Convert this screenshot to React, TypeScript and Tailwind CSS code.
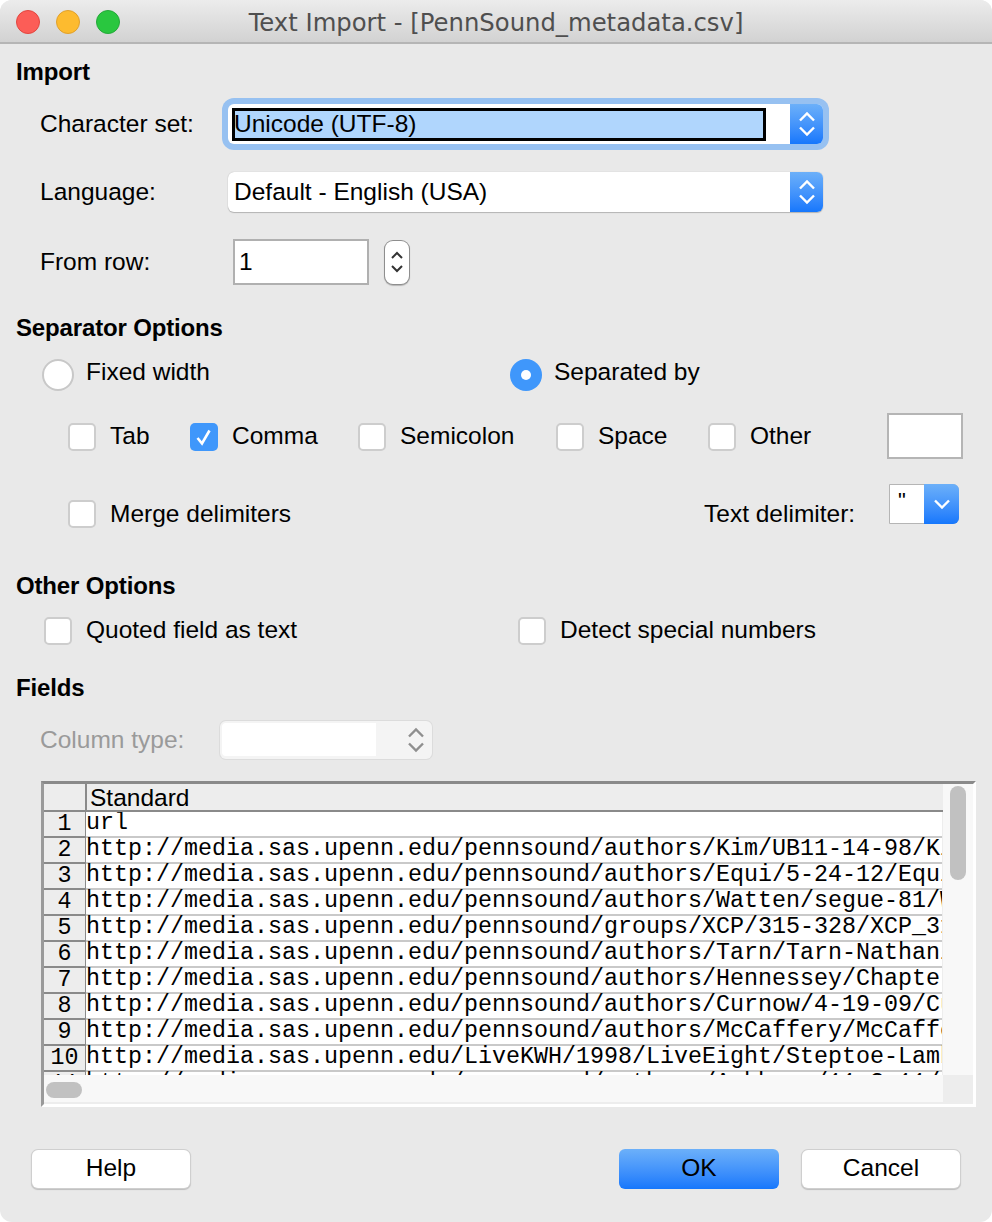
const rows = [
  "url",
  "http://media.sas.upenn.edu/pennsound/authors/Kim/UB11-14-98/Kim",
  "http://media.sas.upenn.edu/pennsound/authors/Equi/5-24-12/Equi",
  "http://media.sas.upenn.edu/pennsound/authors/Watten/segue-81/Watten",
  "http://media.sas.upenn.edu/pennsound/groups/XCP/315-328/XCP_315",
  "http://media.sas.upenn.edu/pennsound/authors/Tarn/Tarn-Nathaniel",
  "http://media.sas.upenn.edu/pennsound/authors/Hennessey/Chapter",
  "http://media.sas.upenn.edu/pennsound/authors/Curnow/4-19-09/Curnow",
  "http://media.sas.upenn.edu/pennsound/authors/McCaffery/McCaffery",
  "http://media.sas.upenn.edu/LiveKWH/1998/LiveEight/Steptoe-Lamb",
  "http://media.sas.upenn.edu/pennsound/authors/Ashbery/11-3-11/Ashbery",
];

function Updown({ color = "white" }: { color?: string }) {
  return (
    <svg width="16" height="26" viewBox="0 0 16 26" fill="none" stroke={color} strokeWidth="2.4">
      <path d="M1 9.5 L8 2.5 L15 9.5" />
      <path d="M1 16.5 L8 23.5 L15 16.5" />
    </svg>
  );
}

function Check({ checked, className = "" }: { checked?: boolean; className?: string }) {
  return (
    <span
      className={
        checked
          ? "flex h-7 w-7 shrink-0 items-center justify-center rounded-[5px] bg-[#3f97fb] " + className
          : "block h-7 w-7 shrink-0 rounded-[5px] border-2 border-[#cdcdcd] bg-white " + className
      }
    >
      {checked && (
        <svg width="18" height="18" viewBox="0 0 18 18" fill="none" stroke="white" strokeWidth="2.6">
          <path d="M2.5 10 L7 15.5 L14.5 2.5" />
        </svg>
      )}
    </span>
  );
}

function Option({ label, width, checked }: { label: string; width: string; checked?: boolean }) {
  return (
    <div className={"flex items-center gap-[14px] " + width}>
      <Check checked={checked} />
      <span>{label}</span>
    </div>
  );
}

function Radio({ label, selected, width }: { label: string; selected?: boolean; width: string }) {
  return (
    <div className={"flex items-center gap-3 " + width}>
      {selected ? (
        <span className="flex h-8 w-8 items-center justify-center rounded-full bg-[#3f97fb]">
          <span className="h-[10px] w-[10px] rounded-full bg-white" />
        </span>
      ) : (
        <span className="block h-8 w-8 rounded-full border-2 border-[#c8c8c8] bg-white" />
      )}
      <span className="-translate-y-[3px]">{label}</span>
    </div>
  );
}

function Heading({ children, className = "" }: { children: string; className?: string }) {
  return <h2 className={"pl-4 font-bold leading-7 text-[24px] tracking-[-0.15px] " + className}>{children}</h2>;
}

function PushButton({ label, primary, className = "" }: { label: string; primary?: boolean; className?: string }) {
  return (
    <button
      className={
        (primary
          ? "h-[40px] w-[160px] bg-gradient-to-b from-[#6cb0f9] to-[#1577fc] "
          : "mt-px h-[38px] w-[158px] bg-white shadow-[0_0_0_1px_#cfcfcf,0_1px_1px_1px_#bdbdbd] ") +
        "rounded-[6px] text-center " +
        className
      }
    >
      {label}
    </button>
  );
}

export default function App() {
  return (
    <div className="h-[1222px] w-[992px] bg-white font-['Liberation_Sans',Arial,sans-serif] text-[24.5px] text-black">
      <div className="h-full overflow-hidden rounded-[12px] bg-[#e9e9e9]">
        {/* title bar */}
        <div className="relative flex h-[44px] items-center justify-center border-b-2 border-[#b5b5b5] bg-gradient-to-b from-[#ececec] to-[#d2d2d2]">
          <div className="absolute left-4 top-[10px] flex gap-4">
            <span className="h-6 w-6 rounded-full border border-[#e2463f] bg-[#fc5d57]" />
            <span className="h-6 w-6 rounded-full border border-[#e0a02c] bg-[#fdbb2f]" />
            <span className="h-6 w-6 rounded-full border border-[#25a83a] bg-[#29c73f]" />
          </div>
          <span className="translate-y-[2px] font-['DejaVu_Sans',sans-serif] text-[24.3px] text-[#4f4f4f]">
            Text Import - [PennSound_metadata.csv]
          </span>
        </div>

        <Heading className="mt-[14px]">Import</Heading>

        {/* character set */}
        <div className="mt-[18px] flex h-[40px] items-center pl-10">
          <span className="w-[188px]">Character set:</span>
          <div className="flex h-[40px] w-[595px] rounded-[6px] bg-white shadow-[0_0_0_6px_#97c1f1]">
            <div className="flex flex-1 items-center pl-1">
              <div className="flex h-[33px] w-[534px] items-center border-[3px] border-black bg-[#b0d6fd] leading-none">
                <span className="-ml-px">Unicode (UTF-8)</span>
              </div>
            </div>
            <div className="flex w-[33px] items-center justify-center rounded-r-[6px] bg-gradient-to-b from-[#6cb0f9] to-[#1577fc]">
              <Updown />
            </div>
          </div>
        </div>

        {/* language */}
        <div className="mt-[28px] flex h-[40px] items-center pl-10">
          <span className="w-[188px]">Language:</span>
          <div className="flex h-[40px] w-[595px] rounded-[6px] bg-white shadow-[0_0_1px_#a8a8a8,0_1px_1px_#b5b5b5]">
            <div className="flex flex-1 items-center pl-[6px]">Default - English (USA)</div>
            <div className="flex w-[33px] items-center justify-center rounded-r-[6px] bg-gradient-to-b from-[#6cb0f9] to-[#1577fc]">
              <Updown />
            </div>
          </div>
        </div>

        {/* from row */}
        <div className="mt-[27px] flex h-[46px] items-center pl-10">
          <span className="w-[193px]">From row:</span>
          <div className="flex h-[46px] w-[136px] items-center border-2 border-[#b0b0b0] bg-white pl-1">1</div>
          <div className="ml-4 flex h-[43px] w-6 items-center justify-center rounded-[8px] bg-white shadow-[0_0_0_1px_#8e8e8e,0_1px_1px_1px_#b5b5b5]">
            <svg width="12" height="26" viewBox="0 0 12 26" fill="none" stroke="#333" strokeWidth="2">
              <path d="M1 9 L6 4 L11 9" />
              <path d="M1 17 L6 22 L11 17" />
            </svg>
          </div>
        </div>

        <Heading className="mt-[29px]">Separator Options</Heading>

        <div className="mt-[15px] flex pl-[42px]">
          <Radio label="Fixed width" width="w-[468px]" />
          <Radio label="Separated by" selected width="w-[300px]" />
        </div>

        <div className="mt-[19px] flex h-[46px] items-center pl-[68px]">
          <div className="mt-[2px] flex items-center">
            <Option label="Tab" width="w-[122px]" />
            <Option label="Comma" checked width="w-[168px]" />
            <Option label="Semicolon" width="w-[198px]" />
            <Option label="Space" width="w-[152px]" />
            <Option label="Other" width="w-[179px]" />
          </div>
          <div className="h-[46px] w-[76px] border-2 border-[#b5b5b5] bg-white" />
        </div>

        {/* the list box sits higher than its label and the checkbox */}
        <div className="mt-[25px] flex h-[49px] items-end pl-[68px]">
          <Option label="Merge delimiters" width="w-[636px]" />
          <span className="w-[185px]">Text delimiter:</span>
          <div className="flex h-[40px] w-[70px] self-start rounded-r-[6px] border border-[#b5b5b5] bg-white">
            <span className="flex-1 pl-2 text-[22px] leading-[32px]">"</span>
            <div className="-my-px -mr-px flex w-[35px] items-center justify-center rounded-r-[6px] bg-gradient-to-b from-[#6cb0f9] to-[#1577fc]">
              <svg width="16" height="10" viewBox="0 0 16 10" fill="none" stroke="white" strokeWidth="2.4">
                <path d="M1 1.5 L8 8.5 L15 1.5" />
              </svg>
            </div>
          </div>
        </div>

        <Heading className="mt-[39px]">Other Options</Heading>

        <div className="mt-[17px] flex h-7 items-center pl-[44px]">
          <div className="flex w-[474px] items-center gap-[14px]">
            <Check />
            <span>Quoted field as text</span>
          </div>
          <div className="flex items-center gap-[14px]">
            <Check />
            <span>Detect special numbers</span>
          </div>
        </div>

        <Heading className="mt-[29px]">Fields</Heading>

        {/* column type */}
        <div className="mt-[18px] flex h-[40px] items-center pl-10 text-[#9a9a9a]">
          <span className="w-[180px] translate-y-px">Column type:</span>
          <div className="flex h-[38px] w-[212px] items-center rounded-[6px] bg-[#f4f4f4] pl-[2px] shadow-[0_0_0_1px_#dcdcdc]">
            <div className="h-[33px] w-[154px] rounded-l-[4px] bg-white" />
            <div className="flex flex-1 justify-end pr-2">
              <Updown color="#8f8f8f" />
            </div>
          </div>
        </div>

        {/* preview table */}
        <div className="ml-[41px] mt-[21px] flex h-[326px] w-[935px] border-[3px] border-b-white border-l-[#9a9a9a] border-r-white border-t-[#8a8a8a] bg-[#ededed]">
          <div className="flex w-[899px] flex-col">
            <div className="flex h-[28px] shrink-0 border-b-2 border-[#8a8a8a]">
              <div className="w-[43px] border-r-2 border-[#8a8a8a]" />
              <span className="pl-[3px] leading-[27px]">Standard</span>
            </div>
            <div className="h-[263px] overflow-hidden font-['Liberation_Mono',monospace] text-[23.33px]">
              {rows.map((text, i) => (
                <div key={i} className="flex h-[26px]">
                  <div className="w-[43px] shrink-0 border-b-2 border-r-2 border-[#8a8a8a] bg-[#ededed] text-center leading-[24px]">
                    {i + 1}
                  </div>
                  <div className="-ml-px w-[856px] overflow-x-clip whitespace-nowrap border-b-2 border-[#c9c9c9] bg-white leading-[23px]">
                    {text}
                  </div>
                </div>
              ))}
            </div>
            <div className="flex h-[27px] shrink-0 items-center bg-[#f8f8f8] pl-[2px] pt-[3px]">
              <div className="h-4 w-9 rounded-full bg-[#c1c1c1]" />
            </div>
          </div>
          <div className="flex w-[30px] flex-col">
            <div className="h-[291px] bg-[#f8f8f8] pl-[7px] pt-[2px]">
              <div className="h-[94px] w-4 rounded-full bg-[#c1c1c1]" />
            </div>
          </div>
        </div>

        {/* buttons */}
        <div className="mt-[42px] flex items-start pl-[32px]">
          <PushButton label="Help" />
          <PushButton label="OK" primary className="ml-[429px]" />
          <PushButton label="Cancel" className="ml-[23px]" />
        </div>
      </div>
    </div>
  );
}
